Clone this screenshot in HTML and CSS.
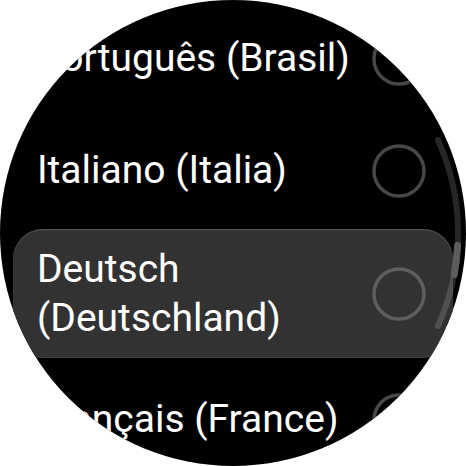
FILE: index.html
```html
<!DOCTYPE html>
<html lang="de">
<head>
<meta charset="utf-8">
<title>Sprache</title>
<link rel="stylesheet" href="styles.css">
</head>
<body>
<div class="screen">
  <div class="list">
    <div class="chip">
      <span class="label">Português (Brasil)</span>
      <svg class="radio" viewBox="0 0 54 54"><circle cx="27" cy="27" r="25"/></svg>
    </div>
    <div class="chip">
      <span class="label">Italiano (Italia)</span>
      <svg class="radio" viewBox="0 0 54 54"><circle cx="27" cy="27" r="25"/></svg>
    </div>
    <div class="chip chip-focused">
      <span class="label">Deutsch<br>(Deutschland)</span>
      <svg class="radio" viewBox="0 0 54 54"><circle cx="27" cy="27" r="25"/></svg>
    </div>
    <div class="chip chip-last">
      <span class="label">Français (France)</span>
      <svg class="radio" viewBox="0 0 54 54"><circle cx="27" cy="27" r="25"/></svg>
    </div>
  </div>
  <svg class="scrollbar" viewBox="0 0 466 466">
    <path class="track" d="M437.9 140 A225 225 0 0 1 437.9 326"/>
    <path class="thumb" d="M457.65 245.5 A225 225 0 0 1 454.1 274.5"/>
  </svg>
</div>
</body>
</html>
```

FILE: styles.css
```css
html, body {
  margin: 0;
  padding: 0;
  background: #ffffff;
}

.screen {
  position: relative;
  width: 466px;
  height: 466px;
  border-radius: 50%;
  overflow: hidden;
  background: #000000;
  font-family: Roboto, "Noto Sans", sans-serif;
  color: #ffffff;
}

.list {
  display: flex;
  flex-direction: column;
  gap: 5px;
  padding: 5px 13px 0 13px;
}

.chip {
  display: flex;
  align-items: center;
  min-height: 107px;
  box-sizing: border-box;
  padding: 16px 27.5px 16px 24px;
  border-radius: 30px;
}

.chip-last {
  padding-top: 19px;
  padding-bottom: 13px;
}

.chip-focused {
  min-height: 0;
  background: #323232;
  box-shadow: inset 0 1px 1px rgba(255, 255, 255, 0.2), inset 0 -1px 1px rgba(255, 255, 255, 0.08);
}

.label {
  flex: 1;
  font-size: 39px;
  line-height: 48.5px;
  white-space: nowrap;
  letter-spacing: 0;
}

.radio {
  flex: none;
  width: 54px;
  height: 54px;
  margin-left: 8px;
}

.radio circle {
  fill: none;
  stroke: #474747;
  stroke-width: 3.5;
}

.chip-focused .radio circle {
  stroke: #5e5e5e;
}

.scrollbar {
  position: absolute;
  left: 0;
  top: 0;
  width: 466px;
  height: 466px;
  pointer-events: none;
}

.track {
  fill: none;
  stroke: rgba(255, 255, 255, 0.15);
  stroke-width: 6;
  stroke-linecap: round;
}

.thumb {
  fill: none;
  stroke: #5c5c5c;
  stroke-width: 7;
  stroke-linecap: round;
}
```
